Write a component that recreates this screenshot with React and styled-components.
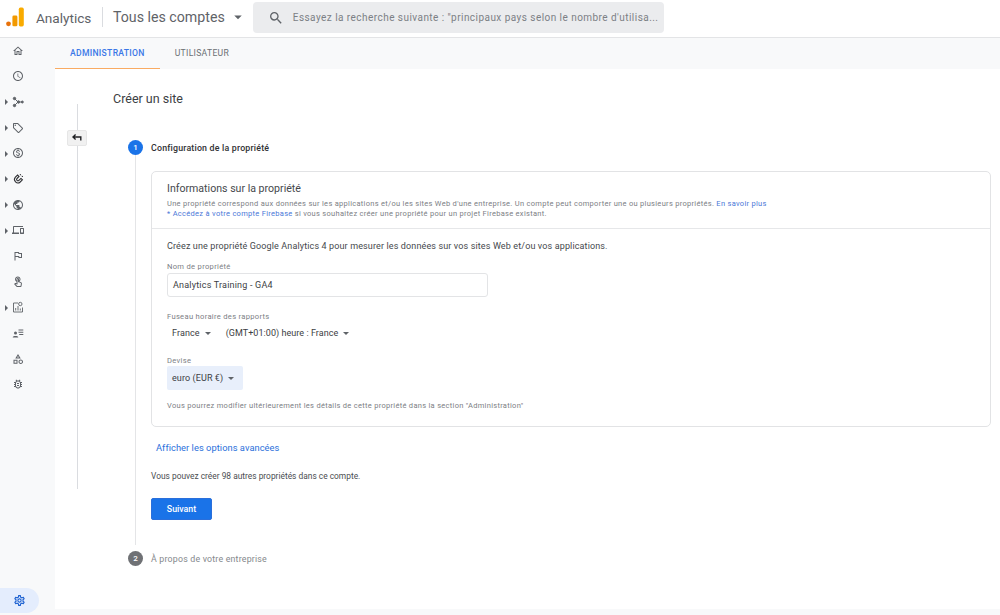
import React from 'react';
import styled, { createGlobalStyle } from 'styled-components';
import {
  MdOutlineHome, MdOutlineAccessTime, MdOutlineLocalOffer, MdOutlineMonetizationOn,
  MdOutlinePublic, MdOutlineDevices, MdOutlineAssistantPhoto, MdOutlineTouchApp,
  MdOutlineCategory, MdOutlineBugReport, MdOutlineSettings, MdSearch, MdArrowDropDown
} from 'react-icons/md';

const Global = createGlobalStyle`
  html, body { margin: 0; padding: 0; background: #f8f9fa; }
  body { font-family: Roboto, "Liberation Sans", sans-serif; color: #3c4043; }
  * { box-sizing: border-box; }
`;

const Page = styled.div`
  width: 1000px;
  height: 615px;
  overflow: hidden;
  display: flex;
  flex-direction: column;
`;

const Header = styled.header`
  height: 38px;
  flex: none;
  background: #fff;
  border-bottom: 1px solid #e3e4e6;
  display: flex;
  align-items: flex-start;
`;

const Logo = styled.svg`
  width: 18px;
  height: 20px;
  margin: 7px 0 0 6px;
`;

const Product = styled.span`
  font-size: 13.6px;
  line-height: 18px;
  margin: 9px 0 0 12px;
  color: #5f6368;
  width: 66px;
`;

const HeadDivider = styled.div`
  width: 1px;
  height: 20px;
  margin-top: 7px;
  background: #dadce0;
`;

const Account = styled.span`
  font-size: 14.2px;
  line-height: 18px;
  margin: 8px 0 0 10px;
  color: #5f6368;
  white-space: nowrap;
`;

const AccountCaret = styled.span`
  margin: 7px 0 0 4px;
  width: 20px;
  height: 20px;
  font-size: 18px;
  color: #5f6368;
  display: flex;
  align-items: center;
`;

const SearchBox = styled.div`
  width: 411px;
  height: 31px;
  margin: 2px 0 0 4px;
  background: #ebecee;
  border-radius: 4px;
  display: flex;
  align-items: center;
  padding-left: 15px;
  color: #5f6368;
  font-size: 16px;
`;

const Placeholder = styled.span`
  margin-left: 9px;
  font-size: 10px;
  letter-spacing: 0.45px;
  color: #7c8085;
  white-space: nowrap;
`;

const Body = styled.div`
  flex: 1;
  display: flex;
  min-height: 0;
`;

const Sidebar = styled.nav`
  width: 55px;
  flex: none;
  display: flex;
  flex-direction: column;
  padding-bottom: 2px;
`;

const NavRow = styled.div`
  height: 25.67px;
  flex: none;
  display: flex;
  align-items: center;
  position: relative;
  padding-left: 12px;
  font-size: 12px;
  color: #5f6368;
`;

const NavArrow = styled.span`
  position: absolute;
  left: 5px;
  top: 10px;
  width: 0;
  height: 0;
  border-left: 3px solid #5f6368;
  border-top: 3px solid transparent;
  border-bottom: 3px solid transparent;
`;

const SettingsPill = styled.div`
  margin-top: auto;
  width: 39px;
  height: 25px;
  background: #e4edfd;
  border-radius: 0 13px 13px 0;
  display: flex;
  align-items: center;
  padding-left: 12.5px;
  font-size: 13px;
  color: #1a5fd0;
`;

const Content = styled.div`
  flex: 1;
  display: flex;
  flex-direction: column;
  min-width: 0;
`;

const Tabs = styled.div`
  height: 31px;
  flex: none;
  display: flex;
`;

const Tab = styled.div`
  padding: 0 15px;
  height: 31px;
  display: flex;
  align-items: center;
  font-size: 8.6px;
  letter-spacing: 0.3px;
  font-weight: ${p => (p.$active ? 500 : 400)};
  padding-bottom: 1px;
  color: ${p => (p.$active ? '#3b78e7' : '#6b6f73')};
  border-bottom: ${p => (p.$active ? '1.5px solid #f9ab62' : '1.5px solid transparent')};
`;

const Main = styled.main`
  height: 540px;
  flex: none;
  background: #fff;
  position: relative;
  padding: 22px 10px 0 58px;
`;

const SideRail = styled.div`
  position: absolute;
  left: 22px;
  top: 35px;
  width: 1px;
  height: 385px;
  background: #dadce0;
`;

const BackButton = styled.div`
  position: absolute;
  left: 12px;
  top: 61px;
  width: 20px;
  height: 16px;
  background: #f1f1f1;
  border: 1px solid #e6e6e6;
  border-radius: 2px;
  display: flex;
  align-items: center;
  justify-content: center;
`;

const PageTitle = styled.h1`
  margin: 0;
  font-size: 12.5px;
  line-height: 16px;
  font-weight: 400;
  color: #3c4043;
`;

const StepHead = styled.div`
  display: flex;
  align-items: center;
  height: 15px;
  gap: 8px;
  margin: ${p => p.$top || 0} 0 0 15px;
`;

const StepDot = styled.span`
  width: 15px;
  height: 15px;
  border-radius: 50%;
  background: ${p => (p.$on ? '#1a73e8' : '#6f7175')};
  color: #fff;
  font-size: 8px;
  font-weight: 500;
  display: flex;
  align-items: center;
  justify-content: center;
  flex: none;
`;

const StepTitle = styled.span`
  font-size: 8.8px;
  letter-spacing: 0.2px;
  font-weight: ${p => (p.$on ? 500 : 400)};
  color: ${p => (p.$on ? '#303134' : '#85888c')};
`;

const StepBody = styled.div`
  margin: 0 0 6px 22px;
  border-left: 1.5px solid #e4e5e7;
  padding: 16px 0 0 15px;
  height: 390px;
`;

const Card = styled.section`
  width: 840px;
  height: 256px;
  border: 1px solid #e2e3e5;
  border-radius: 5px;
`;

const CardHead = styled.div`
  height: 57px;
  border-bottom: 1px solid #e6e7e9;
  padding: 10px 15px 0;
`;

const CardTitle = styled.h2`
  margin: 0 0 3px;
  font-size: 10.6px;
  line-height: 14px;
  font-weight: 400;
  color: #45484c;
`;

const Fine = styled.p`
  margin: 0;
  font-size: 7.5px;
  line-height: 10px;
  letter-spacing: 0.29px;
  color: #7c8085;
  white-space: nowrap;
`;

const FineLink = styled.span`
  color: #4a78d8;
`;

const CardBody = styled.div`
  padding: 11px 15px 0;
  display: flex;
  flex-direction: column;
  align-items: flex-start;
`;

const Lead = styled.p`
  margin: 0;
  font-size: 9px;
  line-height: 12px;
  letter-spacing: 0.13px;
  color: #45484c;
`;

const FieldLabel = styled.label`
  display: block;
  font-size: 7.6px;
  line-height: 10px;
  letter-spacing: 0.3px;
  color: #7c8085;
  margin-top: ${p => p.$top};
`;

const NameInput = styled.div`
  width: 321px;
  height: 24px;
  margin-top: 1px;
  border: 1px solid #e3e4e6;
  border-radius: 3px;
  padding-left: 5px;
  display: flex;
  align-items: center;
  font-size: 9px;
  letter-spacing: 0.2px;
  color: #3c4043;
`;

const SelectRow = styled.div`
  display: flex;
  height: 24px;
  margin-top: -1px;
`;

const Select = styled.div`
  height: 24px;
  display: flex;
  align-items: center;
  padding: 0 ${p => p.$pr || '0'} 0 5px;
  margin-right: ${p => p.$mr || 0};
  font-size: 9px;
  letter-spacing: ${p => p.$ls || '0.1px'};
  color: #3c4043;
  border-radius: 2px;
  background: ${p => (p.$filled ? '#e8effb' : 'transparent')};
  white-space: nowrap;
`;

const Caret = styled.span`
  display: inline-block;
  width: 0;
  height: 0;
  margin-left: 5px;
  border-left: 3.5px solid transparent;
  border-right: 3.5px solid transparent;
  border-top: 3.5px solid #5f6368;
`;

const Note = styled(Fine)`
  margin-top: 11px;
  letter-spacing: 0.29px;
`;

const AdvancedLink = styled.a`
  display: block;
  margin: 15px 0 0 5px;
  font-size: 9.3px;
  line-height: 12px;
  letter-spacing: 0.05px;
  color: #2a6fdb;
`;

const Quota = styled.p`
  margin: 16px 0 0;
  font-size: 8.4px;
  line-height: 12px;
  color: #4a4d51;
`;

const NextButton = styled.button`
  display: block;
  margin-top: 16px;
  width: 61px;
  height: 22px;
  border: 1px solid #2a6fdb;
  border-radius: 2px;
  background: #1a73e8;
  color: #fff;
  font-family: inherit;
  font-size: 8.8px;
  font-weight: 500;
  padding: 0;
`;

const navItems = [
  { icon: <MdOutlineHome /> },
  { icon: <MdOutlineAccessTime /> },
  { arrow: true, icon: (
    <svg width="12" height="12" viewBox="0 0 12 12" fill="none" stroke="#5f6368" strokeWidth="1">
      <path d="M2.5 2.5 L6 6 L2.5 9.5 M6 6 H10" />
      <circle cx="2.5" cy="2.5" r="1.2" fill="#5f6368" />
      <circle cx="2.5" cy="9.5" r="1.2" fill="#5f6368" />
      <circle cx="6.5" cy="6" r="1.2" fill="#5f6368" />
      <circle cx="10.3" cy="6" r="1" fill="#5f6368" />
    </svg>
  ) },
  { arrow: true, icon: <MdOutlineLocalOffer /> },
  { arrow: true, icon: <MdOutlineMonetizationOn /> },
  { arrow: true, icon: (
    <svg width="12" height="12" viewBox="0 0 12 12" fill="none">
      <path d="M9 5.4 L6.9 7.4 A1.3 1.3 0 0 1 5 5.5 L7 3.4 L5.6 2 L3.4 4.2 A3.4 3.4 0 0 0 8.2 9 L10.4 6.8 Z" stroke="#303134" strokeWidth="1.1" />
      <path d="M8.2 1 L8.6 2.3 M11 3.6 L9.7 3.2" stroke="#303134" strokeWidth="1" />
    </svg>
  ) },
  { arrow: true, icon: <MdOutlinePublic /> },
  { arrow: true, icon: <MdOutlineDevices /> },
  { icon: <MdOutlineAssistantPhoto /> },
  { icon: <MdOutlineTouchApp /> },
  { arrow: true, icon: (
    <svg width="12" height="12" viewBox="0 0 12 12" fill="none" stroke="#5f6368" strokeWidth="0.9">
      <path d="M6 2 H1.5 V11 H10.5 V6.5" />
      <circle cx="8.3" cy="3" r="1.7" />
      <path d="M3.7 9.5 V7 M6 9.5 V5 M8.3 9.5 V7.5" />
    </svg>
  ) },
  { icon: (
    <svg width="12" height="12" viewBox="0 0 12 12" fill="#5f6368">
      <circle cx="3.5" cy="6" r="1.5" />
      <path d="M0.8 10 C0.8 8.5 6.2 8.5 6.2 10 V10.5 H0.8 Z" />
      <path d="M6.5 2.5 H11.3 V3.4 H6.5 Z M6.5 4.8 H11.3 V5.7 H6.5 Z M7.2 7.1 H11.3 V8 H7.2 Z" />
    </svg>
  ) },
  { icon: <MdOutlineCategory /> },
  { icon: <MdOutlineBugReport /> }
];

const App = () => {
  return (
    <Page>
      <Global />
      <Header>
        <Logo viewBox="0 0 18 20">
          <circle cx="2.5" cy="16.8" r="2.4" fill="#e8710a" />
          <rect x="6.4" y="8.5" width="5" height="10.8" rx="1.4" fill="#f29900" />
          <rect x="12.8" y="0.6" width="5" height="18.8" rx="1.6" fill="#f9ab00" />
        </Logo>
        <Product>Analytics</Product>
        <HeadDivider />
        <Account>Tous les comptes</Account>
        <AccountCaret><MdArrowDropDown /></AccountCaret>
        <SearchBox>
          <MdSearch />
          <Placeholder>Essayez la recherche suivante : "principaux pays selon le nombre d'utilisa...</Placeholder>
        </SearchBox>
      </Header>
      <Body>
        <Sidebar>
          {navItems.map((item, i) => (
            <NavRow key={i}>
              {item.arrow && <NavArrow />}
              {item.icon}
            </NavRow>
          ))}
          <SettingsPill><MdOutlineSettings /></SettingsPill>
        </Sidebar>
        <Content>
          <Tabs>
            <Tab $active>ADMINISTRATION</Tab>
            <Tab>UTILISATEUR</Tab>
          </Tabs>
          <Main>
            <SideRail />
            <BackButton>
              <svg width="10" height="8" viewBox="0 0 10 8" fill="none" stroke="#202124" strokeWidth="1.4">
                <path d="M3.6 0.6 L1 3 L3.6 5.4 M1 3 H8.8 V6.5" />
              </svg>
            </BackButton>
            <PageTitle>Créer un site</PageTitle>
            <StepHead $top="33px">
              <StepDot $on>1</StepDot>
              <StepTitle $on>Configuration de la propriété</StepTitle>
            </StepHead>
            <StepBody>
              <Card>
                <CardHead>
                  <CardTitle>Informations sur la propriété</CardTitle>
                  <Fine>Une propriété correspond aux données sur les applications et/ou les sites Web d'une entreprise. Un compte peut comporter une ou plusieurs propriétés. <FineLink>En savoir plus</FineLink></Fine>
                  <Fine><FineLink>* Accédez à votre compte Firebase</FineLink> si vous souhaitez créer une propriété pour un projet Firebase existant.</Fine>
                </CardHead>
                <CardBody>
                  <Lead>Créez une propriété Google Analytics 4 pour mesurer les données sur vos sites Web et/ou vos applications.</Lead>
                  <FieldLabel $top="10px">Nom de propriété</FieldLabel>
                  <NameInput>Analytics Training - GA4</NameInput>
                  <FieldLabel $top="15px">Fuseau horaire des rapports</FieldLabel>
                  <SelectRow>
                    <Select $mr="10px">France<Caret /></Select>
                    <Select $ls="0.05px">(GMT+01:00) heure : France<Caret /></Select>
                  </SelectRow>
                  <FieldLabel $top="11px">Devise</FieldLabel>
                  <Select $filled $pr="9px">euro (EUR €)<Caret /></Select>
                  <Note>Vous pourrez modifier ultérieurement les détails de cette propriété dans la section "Administration"</Note>
                </CardBody>
              </Card>
              <AdvancedLink>Afficher les options avancées</AdvancedLink>
              <Quota>Vous pouvez créer 98 autres propriétés dans ce compte.</Quota>
              <NextButton>Suivant</NextButton>
            </StepBody>
            <StepHead>
              <StepDot>2</StepDot>
              <StepTitle>À propos de votre entreprise</StepTitle>
            </StepHead>
          </Main>
        </Content>
      </Body>
    </Page>
  );
};

export default App;
